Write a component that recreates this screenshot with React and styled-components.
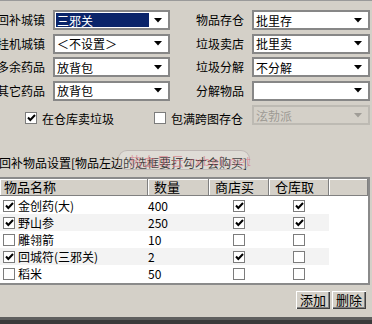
import React from 'react';
import styled, { createGlobalStyle } from 'styled-components';

const GlobalStyle = createGlobalStyle`
  html, body {
    margin: 0;
    padding: 0;
    background: #d4d0c8;
  }
  body {
    font-family: "Noto Sans CJK SC", "Liberation Sans", sans-serif;
    font-size: 12px;
    color: #000;
  }
`;

const Window = styled.div`
  position: relative;
  width: 372px;
  height: 324px;
  box-sizing: border-box;
  overflow: hidden;
  border-top: 1px solid #9a9a9a;
  display: flex;
  flex-direction: column;
`;

const FormGrid = styled.div`
  display: grid;
  grid-template-columns: 53px 117px 66px 118px;
  grid-auto-rows: 20px;
  column-gap: 8px;
  row-gap: 3.5px;
  margin: 9px 0 0 -8px;
`;

const Label = styled.div`
  display: flex;
  align-items: center;
  justify-content: flex-end;
  white-space: nowrap;
  line-height: 14px;
`;

const SelectBox = styled.div`
  display: flex;
  align-items: center;
  box-sizing: border-box;
  height: 20px;
  border: 2px solid ${(p) => (p.disabled ? '#bdbab3' : '#878787')};
  background: ${(p) => (p.disabled ? '#d4d0c8' : '#fff')};
  color: ${(p) => (p.disabled ? '#9d9a94' : '#000')};
  padding: 1px;
`;

const SelectText = styled.div`
  flex: 1;
  height: 100%;
  display: flex;
  align-items: center;
  padding-left: 1px;
  white-space: nowrap;
  background: ${(p) => (p.selected ? '#0a246a' : 'transparent')};
  color: ${(p) => (p.selected ? '#fff' : 'inherit')};
`;

const Arrow = styled.div`
  width: 18px;
  display: flex;
  justify-content: center;
  align-items: center;
`;

const CheckRow = styled.div`
  display: flex;
  align-items: flex-end;
  margin-top: 4.5px;
  height: 20px;
`;

const CheckItem = styled.label`
  display: flex;
  align-items: center;
  gap: 5px;
  height: 14px;
  margin-left: ${(p) => p.offset}px;
  white-space: nowrap;
`;

const Box = styled.span`
  display: inline-flex;
  align-items: center;
  justify-content: center;
  box-sizing: border-box;
  width: 12px;
  height: 12px;
  border: 1px solid #7c7c7c;
  background: #fff;
  flex-shrink: 0;
`;

const TailSelect = styled.div`
  width: 118px;
  margin-left: auto;
  margin-right: 2px;
`;

const SectionTitle = styled.div`
  position: relative;
  margin: 31px 0 0 -1px;
  height: 14px;
  line-height: 14px;
  white-space: nowrap;
`;

const Watermark = styled.div`
  position: absolute;
  left: 119px;
  top: -6px;
  width: 132px;
  height: 20px;
  border: 1px solid rgba(170, 160, 160, 0.6);
  border-radius: 9px;
  background: rgba(255, 255, 255, 0.25);
  color: rgba(215, 110, 125, 0.6);
  font-size: 13px;
  line-height: 20px;
  padding-left: 10px;
  box-sizing: border-box;
  letter-spacing: 1px;
`;

const ListBox = styled.div`
  margin: 7px 2px 0 -2px;
  height: 108px;
  box-sizing: border-box;
  border: 2px solid #8a8a8a;
  background: #fff;
  overflow: hidden;
`;

const Grid = styled.div`
  display: grid;
  grid-template-columns: 148px 61px 60px 60px 1fr;
`;

const HeadCell = styled.div`
  height: 17px;
  box-sizing: border-box;
  background: #d4d0c8;
  border-right: 1px solid #808080;
  border-bottom: 1px solid #808080;
  box-shadow: inset 1px 1px 0 #fff;
  padding-left: ${(p) => p.pad}px;
  font-size: 13px;
  line-height: 16px;
  white-space: nowrap;
`;

const Body = styled.div`
  margin-top: 1px;
`;

const Cell = styled.div`
  height: 17px;
  display: flex;
  align-items: center;
  justify-content: ${(p) => (p.center ? 'center' : 'flex-start')};
  gap: 3px;
  padding-left: ${(p) => p.pad || 0}px;
  background: ${(p) => (p.striped ? '#f3f3f3' : 'transparent')};
  white-space: nowrap;
`;

const ButtonRow = styled.div`
  display: flex;
  justify-content: flex-end;
  gap: 2px;
  margin-top: 6px;
  padding-right: 6px;
`;

const Button = styled.button`
  width: 34px;
  height: 18px;
  padding: 0;
  font-family: inherit;
  font-size: 13px;
  line-height: 14px;
  background: #d4d0c8;
  border: none;
  box-shadow: inset 1px 1px 0 #fff, inset -1px -1px 0 #404040, inset -2px -2px 0 #808080;
  color: #000;
`;

const BottomBar = styled.div`
  margin-top: auto;
  height: 7px;
  border-top: 3px solid #5f5f5f;
  box-sizing: border-box;
  background: #3a3a3a;
`;

const ArrowIcon = ({ color = '#000' }) => (
  <svg width="8" height="5" viewBox="0 0 8 5">
    <polygon points="0,0 8,0 4,4.5" fill={color} />
  </svg>
);

const Tick = () => (
  <svg width="9" height="8" viewBox="0 0 9 8">
    <polyline points="1,3.5 3.3,6 8,1" fill="none" stroke="#000" strokeWidth="2" />
  </svg>
);

function Check({ checked }) {
  return <Box>{checked && <Tick />}</Box>;
}

function Select({ value, selected, disabled }) {
  return (
    <SelectBox disabled={disabled}>
      <SelectText selected={selected}>{value}</SelectText>
      <Arrow>
        <ArrowIcon color={disabled ? '#a09d97' : '#000'} />
      </Arrow>
    </SelectBox>
  );
}

const fields = [
  ['回补城镇', '三邪关', '物品存仓', '批里存'],
  ['挂机城镇', '＜不设置＞', '垃圾卖店', '批里卖'],
  ['多余药品', '放背包', '垃圾分解', '不分解'],
  ['其它药品', '放背包', '分解物品', ''],
];

const items = [
  { name: '金创药(大)', qty: 400, on: true, shop: true, store: true },
  { name: '野山参', qty: 250, on: true, shop: true, store: true },
  { name: '雕翎箭', qty: 10, on: false, shop: false, store: false },
  { name: '回城符(三邪关)', qty: 2, on: true, shop: true, store: false },
  { name: '稻米', qty: 50, on: false, shop: false, store: false },
];

export default function App() {
  return (
    <>
      <GlobalStyle />
      <Window>
        <FormGrid>
          {fields.map(([l1, v1, l2, v2], i) => (
            <React.Fragment key={l1}>
              <Label>{l1}</Label>
              <Select value={v1} selected={i === 0} />
              <Label>{l2}</Label>
              <Select value={v2} />
            </React.Fragment>
          ))}
        </FormGrid>

        <CheckRow>
          <CheckItem offset={25}>
            <Check checked />
            在仓库卖垃圾
          </CheckItem>
          <CheckItem offset={40}>
            <Check />
            包满跨图存仓
          </CheckItem>
          <TailSelect>
            <Select value="泫勃派" disabled />
          </TailSelect>
        </CheckRow>

        <SectionTitle>
          回补物品设置[物品左边的选框要打勾才会购买]
          <Watermark>热血风云 rxbei.net</Watermark>
        </SectionTitle>

        <ListBox>
          <Grid>
            <HeadCell pad={4}>物品名称</HeadCell>
            <HeadCell pad={6}>数量</HeadCell>
            <HeadCell pad={6}>商店买</HeadCell>
            <HeadCell pad={6}>仓库取</HeadCell>
            <HeadCell />
          </Grid>
          <Body>
            {items.map((it, i) => {
              const striped = i % 2 === 1;
              return (
                <Grid key={it.name}>
                  <Cell pad={3} striped={striped}>
                    <Check checked={it.on} />
                    {it.name}
                  </Cell>
                  <Cell striped={striped}>{it.qty}</Cell>
                  <Cell center striped={striped}>
                    <Check checked={it.shop} />
                  </Cell>
                  <Cell center striped={striped}>
                    <Check checked={it.store} />
                  </Cell>
                  <Cell />
                </Grid>
              );
            })}
          </Body>
        </ListBox>

        <ButtonRow>
          <Button>添加</Button>
          <Button>删除</Button>
        </ButtonRow>

        <BottomBar />
      </Window>
    </>
  );
}
